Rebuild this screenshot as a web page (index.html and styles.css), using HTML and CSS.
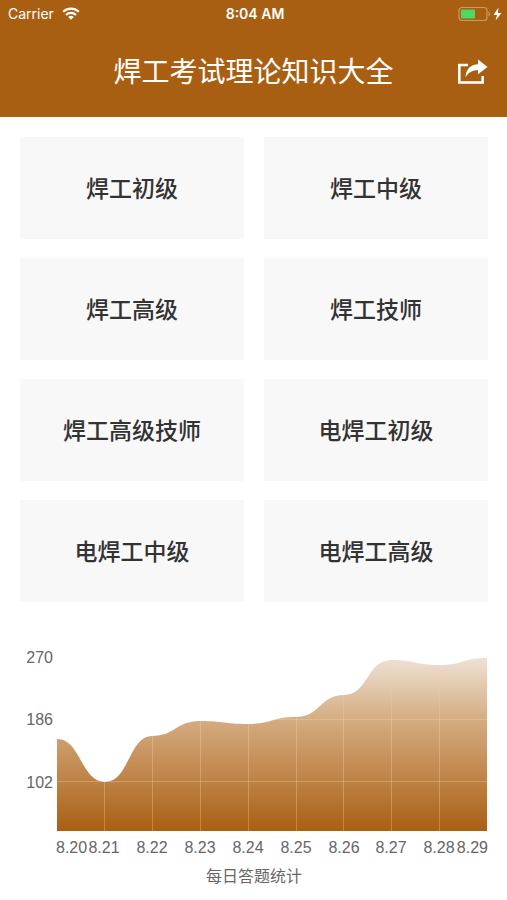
FILE: index.html
```html
<!DOCTYPE html>
<html lang="zh-CN">
<head>
    <meta charset="UTF-8">
    <meta name="viewport" content="width=device-width, initial-scale=1.0">
    <title>焊工考试理论知识大全</title>
    <link rel="stylesheet" href="styles.css">
</head>
<body>
<header class="header">
    <div class="status-bar">
        <div class="carrier">
            <span>Carrier</span>
            <svg class="wifi" viewBox="0 0 18 13" width="18" height="13" aria-hidden="true">
                <path d="M1.2 4.8a11.2 11.2 0 0 1 15.6 0" fill="none" stroke="#fff" stroke-width="2.2"/>
                <path d="M4 7.9a7.2 7.2 0 0 1 10 0" fill="none" stroke="#fff" stroke-width="2.1"/>
                <path d="M6.2 10a4 4 0 0 1 5.6 0L9 12.8z" fill="#fff"/>
            </svg>
        </div>
        <time class="clock">8:04 AM</time>
        <div class="power">
            <svg viewBox="0 0 44 16" width="44" height="16" aria-hidden="true">
                <rect x="1" y="1.5" width="28" height="13" rx="3" fill="none" stroke="#d09a60" stroke-width="1.2"/>
                <rect x="3" y="3.5" width="14" height="9" rx="1" fill="#4cd964"/>
                <path d="M30.5 5.5c2 .6 2 4.4 0 5z" fill="#d09a60"/>
                <path d="M40.500 1.500L35.500 9h3.500l-1.400 5.500L43.500 7h-3.700z" fill="#fff"/>
            </svg>
        </div>
    </div>
    <div class="title-bar">
        <h1>焊工考试理论知识大全</h1>
        <button class="share" type="button" aria-label="分享">
            <svg viewBox="0 0 30 26" width="30" height="26" aria-hidden="true">
                <path d="M10 6H1.300v17.500h23.400V17" fill="none" stroke="#fff" stroke-width="2.600"/>
                <path d="M20 .5L29.500 8 20 15.200v-4C14.500 11 11 13 7.500 18.200 8 10 12.500 5.600 20 5.200z" fill="#fff"/>
            </svg>
        </button>
    </div>
</header>

<main>
    <nav class="levels">
        <button type="button">焊工初级</button>
        <button type="button">焊工中级</button>
        <button type="button">焊工高级</button>
        <button type="button">焊工技师</button>
        <button type="button">焊工高级技师</button>
        <button type="button">电焊工初级</button>
        <button type="button">电焊工中级</button>
        <button type="button">电焊工高级</button>
    </nav>

    <figure class="stats">
        <svg class="chart" viewBox="0 0 468 215" role="img" aria-label="每日答题统计">
            <defs>
                <linearGradient id="fill" x1="0" y1="0" x2="0" y2="1">
                    <stop offset="0" stop-color="#eee1d4"/>
                    <stop offset="0.35" stop-color="#d5ad83"/>
                    <stop offset="0.72" stop-color="#bd8143"/>
                    <stop offset="1" stop-color="#a95f12"/>
                </linearGradient>
                <linearGradient id="line" gradientUnits="userSpaceOnUse" x1="0" y1="13" x2="0" y2="186">
                    <stop offset="0" stop-color="#e9cfb0" stop-opacity="0"/>
                    <stop offset="0.35" stop-color="#e9c59a" stop-opacity="0.6"/>
                    <stop offset="1" stop-color="#e0a766" stop-opacity="0.5"/>
                </linearGradient>
                <clipPath id="area">
                    <path d="M37 94C61 94 61 137 85 137S109 91 132 91S156 76 180 76S204 79 228 79S252 72 276 72S300 50 324 50S347 15 371 15S395 20 419 20S443 13 467 13V186H37Z"/>
                </clipPath>
            </defs>
            <g clip-path="url(#area)">
                <rect x="37" y="13" width="430" height="173" fill="url(#fill)"/>
                <path class="grid" d="M37 74.500H467M37 136.500H467M84.500 13V186M132.500 13V186M180.500 13V186M228.500 13V186M276.500 13V186M323.500 13V186M371.500 13V186M419.500 13V186"/>
            </g>
            <g class="axis-y">
                <text x="33" y="18">270</text>
                <text x="33" y="80">186</text>
                <text x="33" y="143">102</text>
            </g>
            <g class="axis-x">
                <text class="first" x="36" y="208">8.20</text>
                <text x="84" y="208">8.21</text>
                <text x="132" y="208">8.22</text>
                <text x="180" y="208">8.23</text>
                <text x="228" y="208">8.24</text>
                <text x="276" y="208">8.25</text>
                <text x="324" y="208">8.26</text>
                <text x="371" y="208">8.27</text>
                <text x="419" y="208">8.28</text>
                <text class="last" x="468" y="208">8.29</text>
            </g>
        </svg>
        <figcaption>每日答题统计</figcaption>
    </figure>
</main>
</body>
</html>
```
FILE: styles.css
```css
* {
    box-sizing: border-box;
}
body {
    margin: 0;
    background: #fff;
    color: #333;
    font-family: "Liberation Sans", "Noto Sans CJK SC", sans-serif;
}
button {
    border: none;
    cursor: pointer;
    font-family: inherit;
}
svg {
    display: block;
}
.header {
    background: #a95f12;
    color: #fff;
}
.status-bar {
    display: grid;
    grid-template-columns: 1fr auto 1fr;
    align-items: center;
    height: 27px;
    padding: 0 5px 0 8px;
    font-family: Inter, sans-serif;
    font-size: 14px;
}
.carrier {
    display: flex;
    align-items: center;
    gap: 8px;
}
.clock {
    font-weight: 600;
}
.power {
    display: flex;
    justify-content: flex-end;
}
.title-bar {
    display: grid;
    grid-template-columns: 30px 1fr 30px;
    align-items: center;
    height: 90px;
    padding: 0 19px;
}
.title-bar h1 {
    grid-column: 2;
    margin: 0;
    padding-top: 2px;
    font-size: 28px;
    font-weight: 400;
    line-height: 40px;
    text-align: center;
}
.share {
    padding: 0;
    background: none;
}
.levels {
    display: grid;
    grid-template-columns: 1fr 1fr;
    gap: 19px 20px;
    padding: 20px 19px 0 20px;
}
.levels button {
    height: 102px;
    padding: 0 0 3px;
    background: #f8f8f8;
    color: #333;
    font-size: 23px;
    font-weight: 500;
}
.stats {
    margin: 0;
    padding: 43px 19px 10px 20px;
}
.chart {
    width: 100%;
}
.grid {
    fill: none;
    stroke: url(#line);
}
.chart text {
    fill: #666;
    font-size: 16px;
}
.axis-y text {
    text-anchor: end;
}
.axis-x text {
    text-anchor: middle;
}
.axis-x .first {
    text-anchor: start;
}
.axis-x .last {
    text-anchor: end;
}
.stats figcaption {
    padding-top: 5px;
    color: #666;
    font-size: 16px;
    line-height: 24px;
    text-align: center;
}
```
